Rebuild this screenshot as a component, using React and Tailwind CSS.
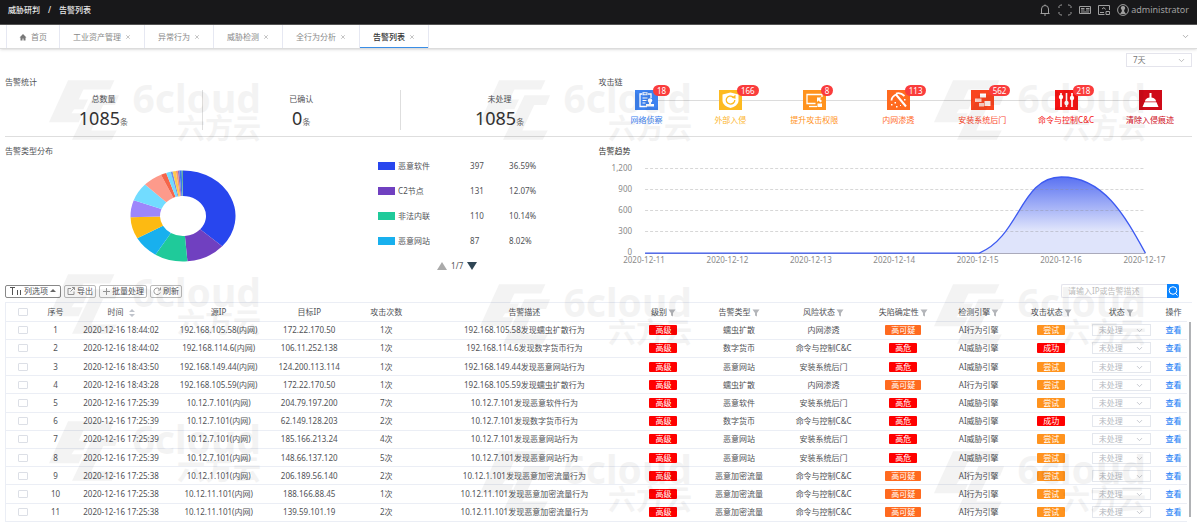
import React, { useState } from "react";
import { ChevronDown, X } from "lucide-react";

const tabs = ["工业资产管理", "异常行为", "威胁检测", "全行为分析", "告警列表"];

const stats = [
  { label: "总数量", value: 1085 },
  { label: "已确认", value: 0 },
  { label: "未处理", value: 1085 },
];

const slices = [
  [36.59, "#2846ee"],
  [12.07, "#7040c0"],
  [10.14, "#1fca9a"],
  [8.02, "#18b0ee"],
  [7.7, "#fdba12"],
  [6.1, "#9d86fb"],
  [6.5, "#72dcff"],
  [6, "#fd9a8b"],
  [1.7, "#f5654a"],
  [1.4, "#72dcff"],
  [0.6, "#6f8fe8"],
  [1, "#fdc94e"],
  [0.6, "#fd9a6b"],
  [0.5, "#9d6fc0"],
  [0.7, "#3b78f0"],
  [0.38, "#5fae9c"],
];

const legend = [
  { name: "恶意软件", count: 397, percent: "36.59%", color: "bg-[#2846ee]" },
  { name: "C2节点", count: 131, percent: "12.07%", color: "bg-[#7040c0]" },
  { name: "非法内联", count: 110, percent: "10.14%", color: "bg-[#1fca9a]" },
  { name: "恶意网站", count: 87, percent: "8.02%", color: "bg-[#18b0ee]" },
];

const chain = [
  { name: "网络侦察", count: 18, bg: "bg-[#3d82f0]", text: "text-[#3d82f0]", icon: "recon" },
  { name: "外部入侵", count: 166, bg: "bg-[#fdba20]", text: "text-[#fdb62c]", icon: "shield" },
  { name: "提升攻击权限", count: 8, bg: "bg-[#ff931e]", text: "text-[#ff931e]", icon: "screen" },
  { name: "内网渗透", count: 113, bg: "bg-[#ff6a1f]", text: "text-[#ff6a1f]", icon: "pick" },
  { name: "安装系统后门", count: 562, bg: "bg-[#f9451f]", text: "text-[#f9451f]", icon: "blocks" },
  { name: "命令与控制C&C", count: 218, bg: "bg-[#f51414]", text: "text-[#f51414]", icon: "sliders" },
  { name: "清除入侵痕迹", bg: "bg-[#cf0a18]", text: "text-[#cf0a18]", icon: "broom" },
];

const columns = [
  { title: "序号", width: 33 },
  { title: "时间", width: 98, sort: true },
  { title: "源IP", width: 97 },
  { title: "目标IP", width: 84 },
  { title: "攻击次数", width: 70 },
  { title: "告警描述", width: 206 },
  { title: "级别", width: 72, filter: true },
  { title: "告警类型", width: 79, filter: true },
  { title: "风险状态", width: 90, filter: true },
  { title: "失陷确定性", width: 69, filter: true },
  { title: "检测引擎", width: 82, filter: true },
  { title: "攻击状态", width: 63, filter: true },
  { title: "状态", width: 77, filter: true },
  { title: "操作", width: 27 },
];

const rows = [
  ["2020-12-16 18:44:02", "192.168.105.58", "172.22.170.50", 1, "蠕虫扩散", "内网渗透", "高可疑", "AI行为引擎", "尝试"],
  ["2020-12-16 18:44:02", "192.168.114.6", "106.11.252.138", 1, "数字货币", "命令与控制C&C", "高危", "AI威胁引擎", "成功"],
  ["2020-12-16 18:43:50", "192.168.149.44", "124.200.113.114", 1, "恶意网站", "安装系统后门", "高危", "AI威胁引擎", "尝试"],
  ["2020-12-16 18:43:28", "192.168.105.59", "172.22.170.50", 1, "蠕虫扩散", "内网渗透", "高可疑", "AI行为引擎", "尝试"],
  ["2020-12-16 17:25:39", "10.12.7.101", "204.79.197.200", 7, "恶意软件", "安装系统后门", "高危", "AI威胁引擎", "尝试"],
  ["2020-12-16 17:25:39", "10.12.7.101", "62.149.128.203", 2, "数字货币", "命令与控制C&C", "高危", "AI威胁引擎", "成功"],
  ["2020-12-16 17:25:39", "10.12.7.101", "185.166.213.24", 4, "恶意网站", "安装系统后门", "高危", "AI威胁引擎", "尝试"],
  ["2020-12-16 17:25:39", "10.12.7.101", "148.66.137.120", 5, "恶意网站", "安装系统后门", "高危", "AI威胁引擎", "尝试"],
  ["2020-12-16 17:25:38", "10.12.1.101", "206.189.56.140", 2, "恶意加密流量", "命令与控制C&C", "高可疑", "AI行为引擎", "尝试"],
  ["2020-12-16 17:25:38", "10.12.11.101", "188.166.88.45", 1, "恶意加密流量", "命令与控制C&C", "高可疑", "AI行为引擎", "尝试"],
  ["2020-12-16 17:25:38", "10.12.11.101", "139.59.101.19", 2, "恶意加密流量", "命令与控制C&C", "高可疑", "AI行为引擎", "尝试"],
];

const tagColors = {
  高级: "bg-[#ff0000]",
  高危: "bg-[#ff0000]",
  成功: "bg-[#ff0000]",
  高可疑: "bg-[#ff6a1f]",
  尝试: "bg-[#ff931e]",
};

function Tag({ children }) {
  return (
    <span className={`flex items-center w-fit mx-auto rounded-[1px] px-[6px] h-[10px] leading-[8px] text-white ${tagColors[children]}`}>
      {children}
    </span>
  );
}

function ChainIcon({ name }) {
  return (
    <svg viewBox="0 0 23 20" className="w-[23px] h-5" fill="none" stroke="white" strokeWidth="1.3">
      {name === "recon" && (
        <>
          <path d="M7 4H5v12.500h7M13 4h3v4" />
          <path d="M8 2.800h4v2H8zM7.500 8h5M7.500 10.500h4M7.500 13h3" strokeWidth="1.100" />
          <circle cx="15" cy="10.500" r="2.200" fill="white" stroke="none" />
          <path d="M14 12h2v2h3v2.500h-8V14h3z" fill="white" stroke="none" />
        </>
      )}
      {name === "shield" && (
        <>
          <path d="M11.500 2.500l8 2v6c0 4-4 6.500-8 7.500-4-1-8-3.500-8-7.500v-6z" fill="white" stroke="none" />
          <path d="M14 6.800A4.300 4 0 1 0 15.800 10" stroke="#fdba20" />
          <path d="M12.500 7.800l4-3v4z" fill="#fdba20" stroke="none" />
        </>
      )}
      {name === "screen" && (
        <>
          <path d="M12.500 13.500H4V4.500h15V7" />
          <path d="M6 16.500h8" />
          <path d="M14 7.500h4.500L17 9l2 2-1.500 1.500-2-2L14 12zM14.500 13.500H19v3.500h-4.500z" fill="white" stroke="none" />
        </>
      )}
      {name === "pick" && (
        <>
          <path d="M9 3.500c3-1 6 0 8.500 2.500M4.500 10.500c0-2.500 2-5 5.500-6.500" strokeWidth="1.800" />
          <path d="M9 4.500L19 16.500" strokeWidth="2" />
          <path d="M4 14h1.500v1.500H4zM7.500 12H9v1.500H7.500zM9 16h1.500v1.500H9zM13 15h1v1h-1zM17 9h1.500v1.500H17z" fill="white" stroke="none" />
        </>
      )}
      {name === "blocks" && (
        <g fill="white" stroke="none">
          <path d="M9 3.500h6v4H9z" />
          <path d="M4 8.500h6.500v3.500H4z" opacity="0.75" />
          <path d="M8 13h5v3.500H8z" opacity="0.75" />
          <path d="M13.500 11h6v5h-6z" opacity="0.9" />
        </g>
      )}
      {name === "sliders" && (
        <>
          <path d="M6 3v14M11.500 3v14M17 3v14" strokeWidth="1.600" />
          <g fill="white" stroke="none">
            <circle cx="6" cy="7" r="2.200" />
            <circle cx="11.500" cy="13" r="2.200" />
            <circle cx="17" cy="8" r="2.200" />
          </g>
        </>
      )}
      {name === "broom" && (
        <path d="M10.500 3h2v4.500c3 .5 4.500 2 4.500 4H6c0-2 1.500-3.500 4.500-4zM5.500 12.300h12l2 4.700h-16z" fill="white" stroke="none" />
      )}
    </svg>
  );
}

function Filter() {
  return (
    <svg viewBox="0 0 8 8" className="inline-block w-2 h-2 ml-[1px]" fill="#b4b6ba">
      <path d="M0.500 0.500h7L5 4v3.500L3 6.500V4z" />
    </svg>
  );
}

function Donut() {
  const cx = 53;
  const cy = 46;
  const point = (p, rx, ry) => {
    const a = (p / 100) * Math.PI * 2;
    return `${cx + rx * Math.sin(a)} ${cy - ry * Math.cos(a)}`;
  };
  let start = 0;
  return (
    <svg viewBox="0 0 106 92" className="w-[106px] h-[92px]">
      {slices.map(([value, color], i) => {
        const end = Math.min(start + value, 100);
        const large = value > 50 ? 1 : 0;
        const d = `M${point(start, 52.5, 45.5)} A52.5 45.5 0 ${large} 1 ${point(end, 52.5, 45.5)} L${point(end, 23, 20)} A23 20 0 ${large} 0 ${point(start, 23, 20)}Z`;
        start = end;
        return <path key={i} d={d} fill={color} />;
      })}
    </svg>
  );
}

function TrendChart() {
  const days = [11, 12, 13, 14, 15, 16, 17];
  const ticks = ["1,200", "900", "600", "300", "0"];
  const curve = "M46 95H380C421 78 421 19 462 19C504 19 525 57 546 95";
  return (
    <svg viewBox="0 0 593 110" className="w-full" fontSize="8" fill="#8a8a8a">
      <defs>
        <linearGradient id="trend" x1="0" y1="0" x2="0" y2="1">
          <stop offset="0" stopColor="#5a72f2" />
          <stop offset="0.7" stopColor="#dfe4fb" />
          <stop offset="1" stopColor="#dfe4fb" />
        </linearGradient>
      </defs>
      <path d="M380 95C421 78 421 19 462 19C504 19 525 57 546 95Z" fill="url(#trend)" />
      {ticks.map((t, i) => (
        <g key={t}>
          <text x="33" y={13 + i * 21} textAnchor="end">{t}</text>
          {i < 4 && (
            <path d={`M46 ${10.5 + i * 21}H546`} stroke="#8c8c8c" strokeOpacity="0.35" strokeDasharray="3 2" />
          )}
        </g>
      ))}
      <path d="M46 95.500H546" stroke="#aab" />
      <path d={curve} fill="none" stroke="#3d5af1" strokeWidth="1.300" />
      {days.map((d, i) => (
        <text key={d} x={45 + (i * 500) / 6} y="105" textAnchor="middle">2020-12-{d}</text>
      ))}
    </svg>
  );
}

function Watermark() {
  return (
    <div className="flex gap-3 opacity-[0.045] text-black">
      <svg viewBox="0 0 212 180" className="w-[70px] h-[60px]" fill="currentColor">
        <path d="M58 0H198L185 28H104L90 58H118L104 88H76L68 100H102L90 127H0Z" />
        <path d="M135 45H212L200 75H164L128 152H205L190 180H70L104 110Z" />
      </svg>
      <div className="flex flex-col items-end w-[130px] font-bold">
        <span className="text-[39px] leading-[36px]">6cloud</span>
        <span className="text-[28px] leading-[24px]">六方云</span>
      </div>
    </div>
  );
}

function StatusSelect({ index }) {
  return (
    <span className="relative block w-[59px] h-3 mx-auto">
      <select
        aria-label={`状态 ${index}`}
        disabled
        className="block w-full h-3 border border-[#e4e7ed] pl-[6px] leading-[10px] text-[#b4b8c0] appearance-none bg-white opacity-100"
      >
        <option>未处理</option>
      </select>
      <ChevronDown size={9} color="#b4b8c0" strokeWidth={2} className="absolute right-[7px] top-[2px]" />
    </span>
  );
}

function App() {
  const [days, setDays] = useState("7");
  const [search, setSearch] = useState("");
  const [active, setActive] = useState("告警列表");

  return (
    <div className="relative min-h-screen overflow-hidden bg-white text-[8px] leading-[10px] text-[#505256] font-['Noto_Sans','Noto_Sans_CJK_SC',sans-serif]">
      <header className="flex items-center justify-between h-[25px] px-2 pb-1 bg-[#18181a] border-b border-[#555] text-[#e8e8e8]">
        <div className="flex gap-2 font-medium">
          <span>威胁研判</span>
          <span>/</span>
          <span>告警列表</span>
        </div>
        <div className="flex items-center gap-[7px] text-[#a0a0a0]">
          <svg viewBox="0 0 12 12" className="w-3 h-3" fill="none" stroke="currentColor">
            <path d="M1.500 9.500h9M2.500 9.500V5a3.500 3.500 0 0 1 7 0v4.500M5 11h2M6 .5v1" />
          </svg>
          <svg viewBox="0 0 14 12" className="w-[14px] h-3" fill="none" stroke="currentColor">
            <path d="M4 1H2.500L1 2.500V4M10 1h1.500L13 2.500V4M4 11H2.500L1 9.500V8M10 11h1.500L13 9.500V8" />
          </svg>
          <svg viewBox="0 0 12 12" className="w-3 h-3" fill="none" stroke="currentColor">
            <path d="M.5 2.500h11v7H.5zM2 4.500h3.500M7 4.500h3.500M2 6h3.500M7 6h3.500M2 8h8" />
          </svg>
          <svg viewBox="0 0 12 12" className="w-3 h-3" fill="none" stroke="currentColor">
            <path d="M11.500 6V1.500H.5v9h6M2 8.500h4M4 5l2-1.500L7.500 5.500M8 7.500h3.500v3H8z" />
          </svg>
          <div className="flex items-center gap-[2px]">
            <svg viewBox="0 0 12 12" className="w-3 h-3" fill="none" stroke="currentColor">
              <circle cx="6" cy="6" r="5.400" />
              <path d="M6 2a2 2 0 0 1 1.500 3.500L7 7l2 3H3l2-3-.5-1.500A2 2 0 0 1 6 2z" fill="currentColor" stroke="none" />
            </svg>
            <span className="text-[9px]">administrator</span>
          </div>
        </div>
      </header>

      <nav className="flex items-center justify-between h-6 pr-[7px] pl-[6px] border-b border-[#dcdcdc] shadow-sm">
        <div className="flex h-full border-l border-[#e6e8f2] text-[#8a8a8a]">
          <button className="flex items-center gap-1 px-3 border-r border-[#e6e8f2]">
            <svg viewBox="0 0 8 8" className="w-2 h-2" fill="#777">
              <path d="M4 1L0.500 4.500h1V7.500h2V5.500h1v2h2v-3h1z" />
            </svg>
            首页
          </button>
          {tabs.map((t) => (
            <button
              key={t}
              onClick={() => setActive(t)}
              className={`flex items-center gap-1 px-[13px] border-r border-[#e6e8f2] ${active === t ? "text-[#333] font-medium shadow-[inset_0_-1px_0_#3a8ee6]" : ""}`}
            >
              {t}
              <X size={6} color="#888" />
            </button>
          ))}
        </div>
        <ChevronDown size={9} color="#999" />
      </nav>

      <main className="px-[5px]">
        <div className="flex justify-end pt-1">
          <div className="relative w-[66px]">
            <select
              aria-label="时间范围"
              value={days}
              onChange={(e) => setDays(e.target.value)}
              className="block w-full h-[14px] pl-[6px] border border-[#e4e4ec] appearance-none text-[#777]"
            >
              <option value="7">7天</option>
              <option value="30">30天</option>
            </select>
            <ChevronDown size={9} color="#aaa" className="absolute right-[6px] top-[3px]" />
          </div>
        </div>

        <section className="grid grid-cols-2 h-[70px] pt-[10px] border-b border-[#dedede]">
          <div>
            <h2>告警统计</h2>
            <div className="grid grid-cols-3 mt-[3px] divide-x divide-[#dedede] text-center">
              {stats.map((s) => (
                <div key={s.label} className="h-10 pt-1">
                  <p>{s.label}</p>
                  <p className="text-[18px] leading-7 text-[#333]">
                    {s.value}
                    <span className="text-[8px] text-[#666]">条</span>
                  </p>
                </div>
              ))}
            </div>
          </div>
          <div>
            <h2>攻击链</h2>
            <div className="grid grid-cols-7 pl-[6px] mt-[3px]">
              {chain.map((c, i) => (
                <div key={c.name} className="flex flex-col items-center gap-[5px] whitespace-nowrap">
                  <div className="flex items-center w-full">
                    <i className={`flex-1 h-[1px] ${i > 0 ? "bg-[#dcdcdc]" : ""}`} />
                    <div className={`relative ${c.bg}`}>
                      <ChainIcon name={c.icon} />
                      {c.count && (
                        <span className="absolute left-[18px] -top-[5px] px-1 h-[11px] leading-[11px] rounded-full bg-[#fa3c3c] text-white z-10">
                          {c.count}
                        </span>
                      )}
                    </div>
                    <i className={`flex-1 h-[1px] ${i < 6 ? "bg-[#dcdcdc]" : ""}`} />
                  </div>
                  <span className={c.text}>{c.name}</span>
                </div>
              ))}
            </div>
          </div>
        </section>

        <section className="grid grid-cols-2 pt-[9px]">
          <div>
            <h2>告警类型分布</h2>
            <div className="flex">
              <div className="flex justify-center w-3/5 pt-[14px]">
                <Donut />
              </div>
              <div className="pl-[17px] -mt-[3px]">
                {legend.map((l) => (
                  <div key={l.name} className="flex items-center h-[25px]">
                    <i className={`w-[17px] h-2 mr-[3px] ${l.color}`} />
                    <span className="w-[72px]">{l.name}</span>
                    <span className="w-[39px]">{l.count}</span>
                    <span>{l.percent}</span>
                  </div>
                ))}
                <div className="flex items-center gap-1 h-[25px] pl-[59px]">
                  <button aria-label="上一页">
                    <svg viewBox="0 0 10 8" className="w-[10px] h-2"><path d="M5 0L10 8H0z" fill="#aaa" /></svg>
                  </button>
                  <span>1/7</span>
                  <button aria-label="下一页">
                    <svg viewBox="0 0 10 8" className="w-[10px] h-2"><path d="M5 8L0 0h10z" fill="#2f4554" /></svg>
                  </button>
                </div>
              </div>
            </div>
          </div>
          <div>
            <h2 className="text-[#333]">告警趋势</h2>
            <div className="pt-[2px]">
              <TrendChart />
            </div>
          </div>
        </section>

        <section>
          <div className="flex items-center justify-between mt-[6px] pr-[13px]">
            <div className="flex gap-[3px]">
              <button className="flex items-center gap-[2px] h-[13px] px-1 border border-[#888] rounded-[2px]">
                <svg viewBox="0 0 12 10" className="w-3 h-[10px]" stroke="#555">
                  <path d="M0 1.500h5M2.500 1v8M7.500 4v5M10.500 4v5" />
                </svg>
                列选项
                <svg viewBox="0 0 6 4" className="w-[6px] h-1" fill="#666"><path d="M3 0l3 3H0z" /></svg>
              </button>
              <button className="flex items-center gap-[2px] h-[13px] px-[2px] border border-[#bbb] rounded-[2px]">
                <svg viewBox="0 0 8 8" className="w-2 h-2" fill="none" stroke="#999">
                  <path d="M4 1.500H1v6h6V4.500M3.500 4.500l4-4M5 .5h2.500V3" />
                </svg>
                导出
              </button>
              <button className="flex items-center gap-[2px] h-[13px] px-[2px] border border-[#bbb] rounded-[2px]">
                <svg viewBox="0 0 8 8" className="w-2 h-2" stroke="#999"><path d="M1 4.500h7M4.500 1v7" /></svg>
                批量处理
              </button>
              <button className="flex items-center gap-[2px] h-[13px] px-[2px] border border-[#bbb] rounded-[2px]">
                <svg viewBox="0 0 8 8" className="w-2 h-2" fill="none" stroke="#999">
                  <path d="M7 2.500A3.300 3.300 0 1 0 7.300 5.500M7.500.5v2.500H5" />
                </svg>
                刷新
              </button>
            </div>
            <div className="flex h-[14px]">
              <input
                aria-label="搜索"
                value={search}
                onChange={(e) => setSearch(e.target.value)}
                placeholder="请输入IP或告警描述"
                className="w-[106px] pl-[6px] border border-r-0 border-[#e4e4ec] rounded-l-[2px] placeholder:text-[#bbb]"
              />
              <button aria-label="查询" className="flex items-center justify-center w-3 bg-[#0a84ff] rounded-r-[2px]">
                <svg viewBox="0 0 10 10" className="w-[10px] h-[10px]" fill="none" stroke="white">
                  <circle cx="5" cy="4.500" r="3.800" />
                  <path d="M7.500 7.500L9.500 9.500" />
                </svg>
              </button>
            </div>
          </div>

          <div className="mt-[4px] border-t border-l border-[#ebeef5]">
            <div className="relative pr-[5px]">
              <table className="table-fixed w-full h-[219px] text-center whitespace-nowrap">
                <colgroup>
                  <col width="33" />
                  {columns.map((c) => (
                    <col key={c.title} width={c.width} />
                  ))}
                </colgroup>
                <thead>
                  <tr className="h-[18px] border-b border-[#ebeef5]">
                    <th className="leading-none">
                      <input type="checkbox" aria-label="全选" className="block mx-auto appearance-none w-[10px] h-2 border border-[#dcdfe6] rounded-[1px]" />
                    </th>
                    {columns.map((c) => (
                      <th key={c.title} className="font-normal">
                        {c.title}
                        {c.sort && (
                          <svg viewBox="0 0 6 8" className="inline-block w-[6px] h-2 ml-[5px]" fill="#c0c4cc">
                            <path d="M3 0l3 3H0zM3 8l3-3H0z" />
                          </svg>
                        )}
                        {c.filter && <Filter />}
                      </th>
                    ))}
                  </tr>
                </thead>
                <tbody>
                  {rows.map(([time, src, dst, times, type, risk, certainty, engine, attack], i) => (
                    <tr key={i} className="border-b border-[#ebeef5]">
                      <td className="leading-none">
                        <input type="checkbox" aria-label={`选择 ${i + 1}`} className="block mx-auto appearance-none w-[10px] h-2 border border-[#dcdfe6] rounded-[1px]" />
                      </td>
                      <td>{i + 1}</td>
                      <td>{time}</td>
                      <td>{src}(内网)</td>
                      <td>{dst}</td>
                      <td>{times}次</td>
                      <td>{src}发现{type}行为</td>
                      <td><Tag>高级</Tag></td>
                      <td>{type}</td>
                      <td>{risk}</td>
                      <td><Tag>{certainty}</Tag></td>
                      <td>{engine}</td>
                      <td><Tag>{attack}</Tag></td>
                      <td><StatusSelect index={i + 1} /></td>
                      <td><a href="#" className="text-[#2f86f6] font-medium">查看</a></td>
                    </tr>
                  ))}
                </tbody>
              </table>
              <i className="absolute right-[1px] top-[19px] bottom-[5px] w-[2px] bg-[#b0b2b5]" />
            </div>
          </div>
        </section>
      </main>

      <div className="absolute inset-0 pt-20 pl-[49px] grid grid-cols-[431fr_454fr_263fr] pointer-events-none select-none" aria-hidden="true">
        <div className="flex flex-col">
          <Watermark />
          <div className="mt-[134px] mb-[87px]">
            <Watermark />
          </div>
          <Watermark />
        </div>
        <div className="flex flex-col">
          <Watermark />
          <div className="mt-36 mb-[107px]">
            <Watermark />
          </div>
          <Watermark />
        </div>
        <div className="flex flex-col">
          <Watermark />
          <div className="mt-36 mb-[107px]">
            <Watermark />
          </div>
          <Watermark />
        </div>
      </div>
    </div>
  );
}

export default App;
